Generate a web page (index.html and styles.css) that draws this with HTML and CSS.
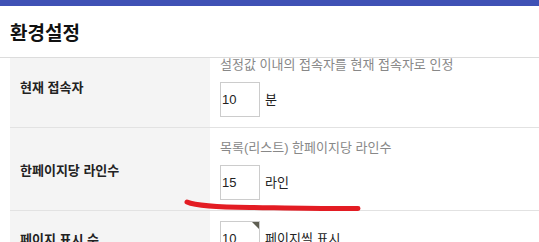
FILE: index.html
```html
<!doctype html>
<html>
<head>
<meta charset='UTF-8'>
<meta name='viewport' content='width=device-width, initial-scale=1'>
<title>환경설정</title>
<link rel="stylesheet" href="styles.css">
</head>
<body>
<div class='top-bar'></div>
<div class='page-head'><h1 class='page-title'>환경설정</h1></div>
<div class='setting-list'>
<div class='setting-row'>
<div class='setting-label'>현재 접속자</div>
<div class='setting-field'>
<div class='setting-desc'>설정값 이내의 접속자를 현재 접속자로 인정</div>
<div class='setting-control'><input type='text' class='num-input' value='10'> <span class='unit'>분</span></div>
</div>
</div>
<div class='setting-row'>
<div class='setting-label'>한페이지당 라인수</div>
<div class='setting-field'>
<div class='setting-desc'>목록(리스트) 한페이지당 라인수</div>
<div class='setting-control'><input type='text' class='num-input' value='15'> <span class='unit'>라인</span></div>
</div>
</div>
<div class='setting-row'>
<div class='setting-label'>페이지 표시 수</div>
<div class='setting-field'>
<div class='setting-control'><span class='input-wrap has-note'><input type='text' class='num-input' value='10'></span> <span class='unit'>페이지씩 표시</span></div>
</div>
</div>
</div>
<svg class='markup' width='539' height='242' viewBox='0 0 539 242'>
<path d='M187 202 C 196 206, 215 207, 250 207.5 S 330 209, 358 208.5' fill='none' stroke='#e31c23' stroke-width='5' stroke-linecap='round'/>
</svg>
</body>
</html>
```

FILE: styles.css
```css
body
{
margin: 0;
font-family: "Liberation Sans", "Noto Sans CJK KR", sans-serif;
font-size: 13px;
color: #222;
background-color: white;
overflow: hidden;
}

.top-bar
{
height: 6px;
background-color: #3f51b5;
position: relative;
z-index: 2;
}

.page-head
{
position: sticky;
top: 0;
z-index: 2;
height: 51px;
display: flex;
align-items: center;
padding-left: 10px;
background-color: white;
border-bottom: 1px solid #dcdcdc;
}

.page-title
{
margin: 0;
font-size: 19px;
font-weight: bold;
color: #111;
}

.setting-list
{
margin-top: -13px;
margin-left: 10px;
}

.setting-row
{
display: grid;
grid-template-columns: 200px 1fr;
border-bottom: 1px solid #e2e2e2;
}

.setting-label
{
display: flex;
align-items: center;
padding-left: 10px;
background-color: #f4f4f4;
font-weight: bold;
}

.setting-field
{
padding: 10px;
}

.setting-desc
{
line-height: 20px;
color: #888;
margin-bottom: 7px;
}

.setting-control
{
display: flex;
align-items: center;
gap: 5px;
}

.num-input
{
box-sizing: border-box;
width: 40px;
height: 35px;
padding: 0 1px;
border: 1px solid #ccc;
font-family: inherit;
font-size: 13px;
color: #222;
}

.input-wrap
{
position: relative;
display: inline-block;
height: 35px;
}

.has-note::after
{
content: '';
position: absolute;
top: 1px;
right: 1px;
border-top: 7px solid #5e5e52;
border-left: 7px solid transparent;
}

.unit
{
font-size: 13px;
margin-top: -3px;
}

.markup
{
position: absolute;
top: 0;
left: 0;
pointer-events: none;
z-index: 3;
}
```
